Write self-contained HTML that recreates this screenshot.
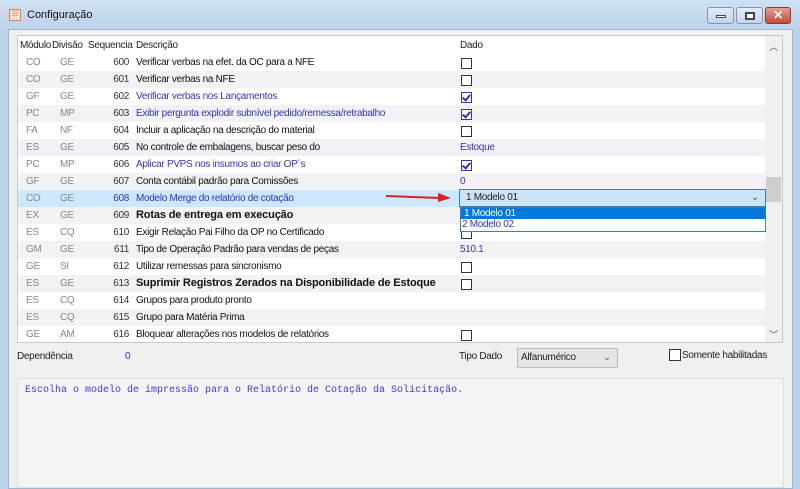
<!DOCTYPE html>
<html><head><meta charset="utf-8"><style>
*{margin:0;padding:0;box-sizing:border-box}
body{width:800px;height:479px;overflow:hidden;background:#b9d1ea;font-family:"Liberation Sans",sans-serif;font-size:10px;letter-spacing:-0.3px;position:relative}
.title{position:absolute;left:0;top:0;width:800px;height:30px;background:linear-gradient(#cfe0f3,#bcd3ec)}
.panel{position:absolute;left:8px;top:29px;width:785px;height:460px;background:#f0f0f0;border:1px solid #a0b4cc}
.tbl{position:absolute;left:17px;top:35px;width:766px;height:308px;background:#fff;border:1px solid #c8c8c8;overflow:hidden}
.row{position:absolute;left:0;width:748px;height:17px;line-height:17px;white-space:nowrap}
.row span{position:absolute;top:0}
.g{background:#f2f2f6}
.c1{left:8px;color:#888}.c2{left:42px;color:#888}.c3{left:70px;width:41px;text-align:right;color:#333}.c4{left:118px;color:#111}
.c5{left:442px;color:#3333bb}
.b{color:#3333bb!important}
.bold{font-weight:bold;font-size:11px;letter-spacing:-0.15px}
.cb{position:absolute;left:443px;top:4px;width:11px;height:11px;border:1px solid #333;background:#fff}
.ck{border-color:#3333aa}
.ck:after{content:"";position:absolute;left:2px;top:0px;width:3px;height:6px;border:solid #3333aa;border-width:0 2px 2px 0;transform:rotate(40deg)}
.sb{position:absolute;right:0;top:0;width:17px;height:306px;background:#f0f0f0}
</style></head><body>
<div class="title"></div>
<div style="position:absolute;left:9px;top:9px;width:12px;height:12px;background:#f6e0d0;border:1px solid #e08050;font-size:7px;color:#e05020;line-height:10px;text-align:center">☷</div>
<div style="position:absolute;left:27px;top:9px;font-size:11px;color:#111;letter-spacing:0">Configuração</div>
<div style="position:absolute;left:707px;top:7px;width:27px;height:17px;border:1px solid #7f95b3;border-radius:3px;background:linear-gradient(#e3ecf7,#c2d3e9)"><div style="position:absolute;left:8px;top:7px;width:10px;height:3px;background:#fff;border:1px solid #445"></div></div>
<div style="position:absolute;left:736px;top:7px;width:27px;height:17px;border:1px solid #7f95b3;border-radius:3px;background:linear-gradient(#e3ecf7,#c2d3e9)"><div style="position:absolute;left:8px;top:4px;width:10px;height:8px;border:2px solid #445;background:#fff"></div></div>
<div style="position:absolute;left:765px;top:7px;width:26px;height:17px;border:1px solid #8a3a30;border-radius:3px;background:linear-gradient(#e8a090,#c44a3a);color:#fff;font-weight:bold;text-align:center;line-height:15px;font-size:12px">✕</div>
<div class="panel"></div>
<div class="tbl">
<div class="row" style="top:1px;color:#222"><span style="left:2px">Módulo</span><span style="left:34px">Divisão</span><span style="left:70px">Sequencia</span><span style="left:118px">Descrição</span><span style="left:442px">Dado</span></div>
<div class="row" style="top:18px"><span class="c1">CO</span><span class="c2">GE</span><span class="c3">600</span><span class="c4">Verificar verbas na efet. da OC para a NFE</span><i class="cb"></i></div>
<div class="row g" style="top:35px"><span class="c1">CO</span><span class="c2">GE</span><span class="c3">601</span><span class="c4">Verificar verbas na NFE</span><i class="cb"></i></div>
<div class="row" style="top:52px"><span class="c1">GF</span><span class="c2">GE</span><span class="c3">602</span><span class="c4 b">Verificar verbas nos Lançamentos</span><i class="cb ck"></i></div>
<div class="row g" style="top:69px"><span class="c1">PC</span><span class="c2">MP</span><span class="c3">603</span><span class="c4 b">Exibir pergunta explodir subnível pedido/remessa/retrabalho</span><i class="cb ck"></i></div>
<div class="row" style="top:86px"><span class="c1">FA</span><span class="c2">NF</span><span class="c3">604</span><span class="c4">Incluir a aplicação na descrição do material</span><i class="cb"></i></div>
<div class="row g" style="top:103px"><span class="c1">ES</span><span class="c2">GE</span><span class="c3">605</span><span class="c4">No controle de embalagens, buscar peso do</span><span class="c5">Estoque</span></div>
<div class="row" style="top:120px"><span class="c1">PC</span><span class="c2">MP</span><span class="c3">606</span><span class="c4 b">Aplicar PVPS nos insumos ao criar OP´s</span><i class="cb ck"></i></div>
<div class="row g" style="top:137px"><span class="c1">GF</span><span class="c2">GE</span><span class="c3">607</span><span class="c4">Conta contábil padrão para Comissões</span><span class="c5">0</span></div>
<div class="row" style="top:154px;background:#cce8ff"><span class="c1">CO</span><span class="c2">GE</span><span class="c3 b">608</span><span class="c4 b">Modelo Merge do relatório de cotação</span></div>
<div class="row g" style="top:171px"><span class="c1">EX</span><span class="c2">GE</span><span class="c3">609</span><span class="c4 bold">Rotas de entrega em execução</span></div>
<div class="row" style="top:188px"><span class="c1">ES</span><span class="c2">CQ</span><span class="c3">610</span><span class="c4">Exigir Relação Pai Filho da OP no Certificado</span><i class="cb"></i></div>
<div class="row g" style="top:205px"><span class="c1">GM</span><span class="c2">GE</span><span class="c3">611</span><span class="c4">Tipo de Operação Padrão para vendas de peças</span><span class="c5">510.1</span></div>
<div class="row" style="top:222px"><span class="c1">GE</span><span class="c2">SI</span><span class="c3">612</span><span class="c4">Utilizar remessas para sincronismo</span><i class="cb"></i></div>
<div class="row g" style="top:239px"><span class="c1">ES</span><span class="c2">GE</span><span class="c3">613</span><span class="c4 bold">Suprimir Registros Zerados na Disponibilidade de Estoque</span><i class="cb"></i></div>
<div class="row" style="top:256px"><span class="c1">ES</span><span class="c2">CQ</span><span class="c3">614</span><span class="c4">Grupos para produto pronto</span></div>
<div class="row g" style="top:273px"><span class="c1">ES</span><span class="c2">CQ</span><span class="c3">615</span><span class="c4">Grupo para Matéria Prima</span></div>
<div class="row" style="top:290px"><span class="c1">GE</span><span class="c2">AM</span><span class="c3">616</span><span class="c4">Bloquear alterações nos modelos de relatórios</span><i class="cb"></i></div>
<div class="sb"><div style="position:absolute;left:4px;top:4px;font-size:9px;color:#555">︿</div><div style="position:absolute;left:1px;top:141px;width:15px;height:25px;background:#cdcdcd"></div><div style="position:absolute;left:4px;top:292px;font-size:9px;color:#555">﹀</div></div>
</div>
<svg style="position:absolute;left:386px;top:191px" width="66" height="12"><line x1="0" y1="5" x2="54" y2="7" stroke="#e02020" stroke-width="2"/><polygon points="52,2 65,7 52,11" fill="#e02020"/></svg>
<div style="position:absolute;left:459px;top:189px;width:307px;height:18px;background:#cce4f7;border:1px solid #3c7fb1;line-height:16px;padding-left:6px;color:#222">1 Modelo 01<span style="position:absolute;right:6px;top:0;color:#555">⌄</span></div>
<div style="position:absolute;left:460px;top:207px;width:306px;height:25px;background:#fff;border:1px solid #3c7fb1">
<div style="height:11px;background:#0078d7;color:#fff;line-height:11px;padding-left:3px">1 Modelo 01</div>
<div style="height:12px;color:#3333bb;line-height:12px;padding-left:1px">2 Modelo 02</div></div>
<div style="position:absolute;left:17px;top:351px;color:#222">Dependência</div>
<div style="position:absolute;left:125px;top:351px;color:#3333bb">0</div>
<div style="position:absolute;left:459px;top:351px;color:#222">Tipo Dado</div>
<div style="position:absolute;left:517px;top:348px;width:101px;height:20px;background:#e5e5e5;border:1px solid #bbb;line-height:18px;padding-left:3px;color:#222">Alfanumérico<span style="position:absolute;right:6px;color:#666">⌄</span></div>
<div style="position:absolute;left:669px;top:349px;width:12px;height:12px;border:1px solid #333;background:#fff"></div>
<div style="position:absolute;left:682px;top:350px;color:#222">Somente habilitadas</div>
<div style="position:absolute;left:17px;top:378px;width:767px;height:110px;background:#f4f4f8;border:1px solid #dedede"></div>
<div style="position:absolute;left:25px;top:385px;font-family:'Liberation Mono',monospace;font-size:10px;letter-spacing:0;color:#4040cc">Escolha o modelo de impressão para o Relatório de Cotação da Solicitação.</div>
</body></html>
